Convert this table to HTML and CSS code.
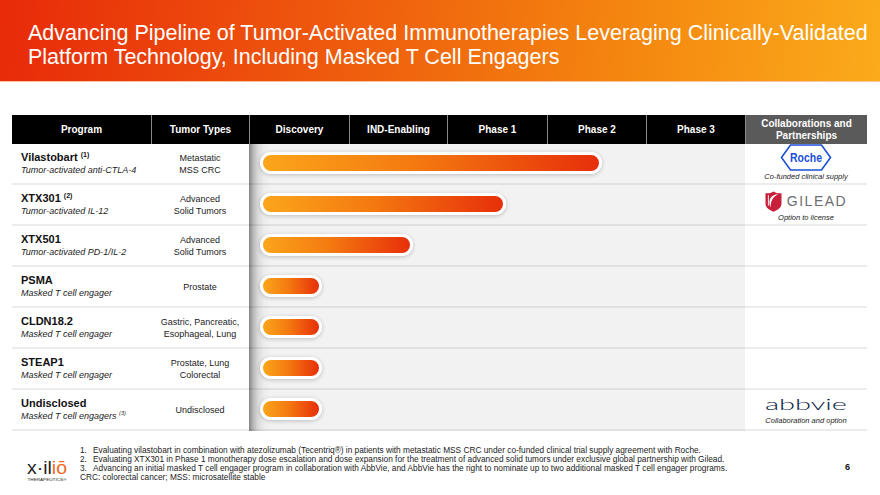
FILE: index.html
```html
<!DOCTYPE html>
<html lang="en">
<head>
<meta charset="utf-8">
<title>Pipeline</title>
<link rel="stylesheet" href="styles.css">
</head>
<body>
<header class="banner">
  <h1>Advancing Pipeline of Tumor-Activated Immunotherapies Leveraging Clinically-Validated Platform Technology, Including Masked T Cell Engagers</h1>
</header>

<main class="pipeline">
  <div class="thead">
    <div class="th">Program</div>
    <div class="th">Tumor Types</div>
    <div class="th">Discovery</div>
    <div class="th">IND-Enabling</div>
    <div class="th">Phase 1</div>
    <div class="th">Phase 2</div>
    <div class="th">Phase 3</div>
    <div class="th collab">Collaborations and<br>Partnerships</div>
  </div>

  <div class="tbody">
    <div class="row">
      <div class="prog"><div class="name">Vilastobart <sup class="fn">(1)</sup></div><div class="sub">Tumor-activated anti-CTLA-4</div></div>
      <div class="tumor">Metastatic<br>MSS CRC</div>
      <div class="track"><div class="bar" style="width:342px"></div></div>
      <div class="partner">
        <svg class="roche" viewBox="0 0 52 27" width="52" height="27">
          <polygon points="1.5,13.5 10.5,1 41.5,1 50.5,13.5 41.5,26 10.5,26" fill="none" stroke="#1b4fd6" stroke-width="1.6"/>
          <text x="26" y="18.3" text-anchor="middle" class="roche-word" textLength="32" lengthAdjust="spacingAndGlyphs">Roche</text>
        </svg>
        <div class="cap">Co-funded clinical supply</div>
      </div>
    </div>

    <div class="row">
      <div class="prog"><div class="name">XTX301 <sup class="fn">(2)</sup></div><div class="sub">Tumor-activated IL-12</div></div>
      <div class="tumor">Advanced<br>Solid Tumors</div>
      <div class="track"><div class="bar" style="width:246px"></div></div>
      <div class="partner">
        <div class="gilead">
          <svg viewBox="0 0 17 21" width="17" height="21">
            <path d="M0.5 2.2 C3 2.6 6 2.2 8.5 0.5 C11 2.2 14 2.6 16.5 2.2 L16.5 12.5 C16.5 16.5 12.8 19 8.5 20.8 C4.2 19 0.5 16.5 0.5 12.5 Z" fill="#c8203b"/>
            <path d="M13.2 3.2 C8.4 5.4 5.4 9.6 5.6 16.6 C4.2 13.6 3.9 9.8 5.4 7.2 C7.2 4.6 10 3.4 13.2 3.2 Z" fill="#fff"/>
            <path d="M3.4 4.2 L3.4 14.6" stroke="#fff" stroke-width="0.9"/>
          </svg>
          <span class="gilead-word">GILEAD</span>
        </div>
        <div class="cap">Option to license</div>
      </div>
    </div>

    <div class="row">
      <div class="prog"><div class="name">XTX501</div><div class="sub">Tumor-activated PD-1/IL-2</div></div>
      <div class="tumor">Advanced<br>Solid Tumors</div>
      <div class="track"><div class="bar" style="width:153px"></div></div>
      <div class="partner"></div>
    </div>

    <div class="row">
      <div class="prog"><div class="name">PSMA</div><div class="sub">Masked T cell engager</div></div>
      <div class="tumor">Prostate</div>
      <div class="track"><div class="bar" style="width:62px"></div></div>
      <div class="partner"></div>
    </div>

    <div class="row">
      <div class="prog"><div class="name">CLDN18.2</div><div class="sub">Masked T cell engager</div></div>
      <div class="tumor">Gastric, Pancreatic,<br>Esophageal, Lung</div>
      <div class="track"><div class="bar" style="width:62px"></div></div>
      <div class="partner"></div>
    </div>

    <div class="row">
      <div class="prog"><div class="name">STEAP1</div><div class="sub">Masked T cell engager</div></div>
      <div class="tumor">Prostate, Lung<br>Colorectal</div>
      <div class="track"><div class="bar" style="width:62px"></div></div>
      <div class="partner"></div>
    </div>

    <div class="row">
      <div class="prog"><div class="name">Undisclosed</div><div class="sub">Masked T cell engagers <sup class="fn-sub">(3)</sup></div></div>
      <div class="tumor">Undisclosed</div>
      <div class="track"><div class="bar" style="width:62px"></div></div>
      <div class="partner">
        <svg class="abbvie" viewBox="0 0 90 18" width="90" height="18">
          <text x="45" y="14" text-anchor="middle" class="abbvie-word" textLength="82" lengthAdjust="spacingAndGlyphs">abbvie</text>
        </svg>
        <div class="cap cap-abbvie">Collaboration and option</div>
      </div>
    </div>
  </div>
</main>

<footer class="footer">
  <svg class="xilio" viewBox="0 0 42 24" width="42" height="24">
    <text x="0" y="15" class="xilio-word" textLength="40" lengthAdjust="spacingAndGlyphs"><tspan fill="#231f20">x·il</tspan><tspan fill="#f26a21">iō</tspan></text>
    <text x="0.5" y="21.5" class="xilio-sub" textLength="39" lengthAdjust="spacingAndGlyphs">THERAPEUTICS®</text>
  </svg>
  <div class="notes">
    <div class="note"><span class="num">1.</span><span>Evaluating vilastobart in combination with atezolizumab (Tecentriq®) in patients with metastatic MSS CRC under co-funded clinical trial supply agreement with Roche.</span></div>
    <div class="note"><span class="num">2.</span><span>Evaluating XTX301 in Phase 1 monotherapy dose escalation and dose expansion for the treatment of advanced solid tumors under exclusive global partnership with Gilead.</span></div>
    <div class="note"><span class="num">3.</span><span>Advancing an initial masked T cell engager program in collaboration with AbbVie, and AbbVie has the right to nominate up to two additional masked T cell engager programs.</span></div>
    <div class="note">CRC: colorectal cancer; MSS: microsatellite stable</div>
  </div>
  <div class="page">6</div>
</footer>
</body>
</html>
```

FILE: styles.css
```css
* {
  box-sizing: border-box;
  margin: 0;
  padding: 0;
}

body {
  width: 880px;
  height: 495px;
  overflow: hidden;
  background: #fff;
  font-family: "Liberation Sans", Arial, sans-serif;
  color: #1a1a1a;
}

/* ---------- title band ---------- */
.banner {
  height: 82px;
  padding: 21px 0 0 28px;
  background: linear-gradient(95deg, #e82a09 0%, #ee560d 35%, #f4850f 70%, #fbab1b 100%);
  border-bottom: 1px solid #f8c39d;
}

.banner h1 {
  font-weight: normal;
  font-size: 21.5px;
  line-height: 24px;
  color: #fff;
}

/* ---------- table ---------- */
.pipeline {
  width: 855px;
  margin: 33px 0 0 12px;
}

.thead {
  display: grid;
  grid-template-columns: 139px 98px 100px 98px 100px 99px 99px 122px;
  height: 29px;
  background: #000;
}

.th {
  display: flex;
  align-items: center;
  justify-content: center;
  text-align: center;
  color: #fff;
  font-weight: bold;
  font-size: 10px;
  line-height: 12px;
  border-left: 1px solid #8a8a8a;
}

.th:first-child {
  border-left: none;
}

.th.collab {
  background: #5a5a5a;
}

.tbody {
  background: linear-gradient(90deg,
    #fff 0, #fff 237px,
    #858585 237px, #b5b5b5 241px, #dadada 246px, #ececec 252px, #f2f2f2 258px,
    #f2f2f2 733px, #fff 733px, #fff 100%);
}

.row {
  display: grid;
  grid-template-columns: 139px 98px 496px 122px;
  height: 41px;
  border-bottom: 2px solid rgba(0, 0, 0, 0.075);
}

.prog {
  display: flex;
  flex-direction: column;
  justify-content: center;
  padding-left: 9px;
}

.name {
  font-size: 11px;
  font-weight: bold;
  line-height: 13px;
  color: #111;
}

.sub {
  font-size: 9px;
  font-style: italic;
  line-height: 13px;
  color: #222;
}

.fn {
  font-size: 7px;
  vertical-align: 4px;
  line-height: 0;
}

.fn-sub {
  font-size: 5.5px;
  vertical-align: 4px;
  line-height: 0;
}

.tumor {
  display: flex;
  align-items: center;
  justify-content: center;
  text-align: center;
  font-size: 9px;
  line-height: 12px;
  color: #222;
}

.track {
  display: flex;
  align-items: center;
  padding-left: 11px;
  padding-bottom: 2px;
}

.bar {
  height: 22px;
  border: 3px solid #fff;
  border-radius: 11px;
  background: linear-gradient(90deg, #fba51b 0%, #f47a10 45%, #e72f0a 100%);
  box-shadow: 0 1px 4px rgba(0, 0, 0, 0.22);
}

/* ---------- partners ---------- */
.partner {
  display: flex;
  flex-direction: column;
  align-items: center;
  justify-content: center;
}

.roche {
  display: block;
  margin-top: -2px;
}

.roche-word {
  font-family: "Liberation Sans", Arial, sans-serif;
  font-size: 13px;
  font-weight: bold;
  fill: #1b4fd6;
}

.cap {
  font-size: 7.5px;
  font-style: italic;
  line-height: 10px;
  color: #222;
  margin-top: 1px;
}

.gilead {
  display: flex;
  align-items: center;
  gap: 5px;
  margin-top: 4px;
}

.gilead svg {
  display: block;
}

.gilead-word {
  font-size: 14px;
  letter-spacing: 1.5px;
  color: #6d6e71;
  line-height: 16px;
}

.abbvie {
  display: block;
  margin-top: 2px;
  overflow: visible;
}

.abbvie-word {
  font-family: Lato, "DejaVu Sans", sans-serif;
  font-weight: 300;
  font-size: 15px;
  fill: #0b1d45;
}

.cap-abbvie {
  margin-top: 2px;
}

/* ---------- footer ---------- */
.footer {
  display: flex;
  align-items: flex-start;
  margin-top: 15px;
  padding-left: 27px;
}

.xilio {
  display: block;
  margin-top: 13px;
  flex: none;
}

.xilio-word {
  font-family: "Liberation Sans", Arial, sans-serif;
  font-size: 18px;
}

.xilio-sub {
  font-family: "Liberation Sans", Arial, sans-serif;
  font-size: 3.5px;
  fill: #231f20;
}

.notes {
  margin-left: 11px;
  font-size: 8.3px;
  line-height: 9px;
  color: #222;
}

.note {
  display: flex;
  white-space: nowrap;
}

.num {
  width: 13px;
  flex: none;
}

.page {
  margin-left: auto;
  margin-right: 30px;
  margin-top: 16px;
  font-size: 9px;
  font-weight: bold;
  color: #111;
}
```
